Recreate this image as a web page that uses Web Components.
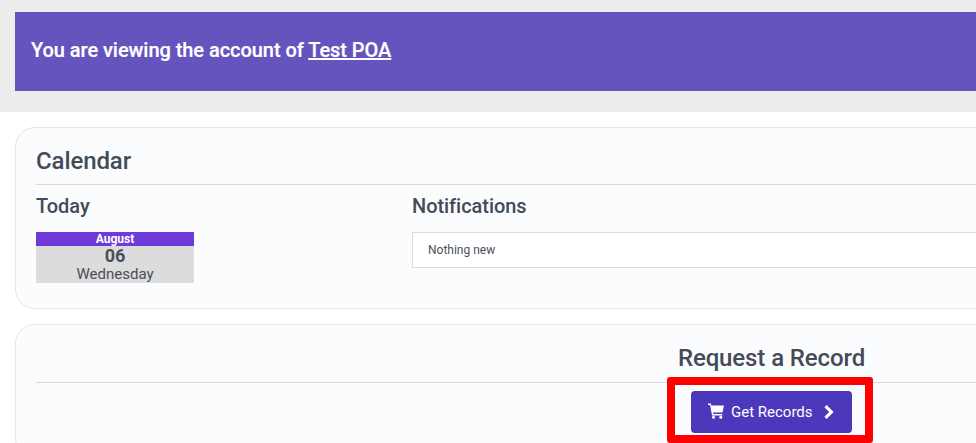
<!DOCTYPE html>
<html>
  <head>
    <meta charset="utf-8" />
    <title>Account</title>
    <style>
      html, body { margin: 0; background: #fff; overflow: hidden; }
      body { font-family: Roboto, "Liberation Sans", sans-serif; color: #3f4752; }
      .page { width: 1543px; }
    </style>
  </head>

  <body>
    <div class="page">
      <account-banner>You are viewing the account of <a>Test POA</a></account-banner>
      <main-card heading="Calendar" style="margin-top: 15px">
        <two-cols>
          <div slot="left">
            <col-title>Today</col-title>
            <date-tile month="August" day="06" weekday="Wednesday"></date-tile>
          </div>
          <div slot="right">
            <col-title>Notifications</col-title>
            <notice-box>Nothing new</notice-box>
          </div>
        </two-cols>
      </main-card>
      <main-card heading="Request a Record" centered style="margin-top: 15px">
        <get-button>Get Records</get-button>
      </main-card>
    </div>

    <script type="text/javascript">
      class AccountBanner extends HTMLElement {
        constructor() {
          super();
          this.attachShadow({ mode: "open" });
          this.shadowRoot.innerHTML = `
        <style>
          :host { display: block; background: #ededed; padding: 12px 0 21px 15px; }
          .bar {
            background: #6554bd; color: #fff; height: 75px; padding: 0 0 4px 16px;
            display: flex; align-items: center; font-size: 20px; font-weight: 500;
            letter-spacing: -0.05px; -webkit-text-stroke: 0.2px #fff;
          }
          ::slotted(a) { color: #fff; text-decoration: underline; }
        </style>
        <div class="bar"><span><slot></slot></span></div>
      `;
        }
      }

      class MainCard extends HTMLElement {
        constructor() {
          super();
          this.attachShadow({ mode: "open" });
          this.shadowRoot.innerHTML = `
        <style>
          :host { display: block; margin: 0 15px; }
          .card {
            background: #fbfcfe; border: 1px solid #e6e6e6; border-radius: 20px;
            padding: 19px 20px 25px;
          }
          h2 {
            margin: 0; font-size: 24px; font-weight: 500; line-height: 28px;
            padding-bottom: 9px; border-bottom: 1px solid #d8d9dc; color: #434b57;
            letter-spacing: -0.1px;
          }
          :host([centered]) h2 { text-align: center; padding-bottom: 10px; }
          :host([centered]) .body { text-align: center; padding-top: 8px; }
        </style>
        <div class="card">
          <h2></h2>
          <div class="body"><slot></slot></div>
        </div>
      `;
        }

        connectedCallback() {
          this.shadowRoot.querySelector("h2").textContent = this.getAttribute("heading");
        }
      }

      class TwoCols extends HTMLElement {
        constructor() {
          super();
          this.attachShadow({ mode: "open" });
          this.shadowRoot.innerHTML = `
        <style>
          :host { display: grid; grid-template-columns: 376px 1fr; }
        </style>
        <slot name="left"></slot>
        <slot name="right"></slot>
      `;
        }
      }

      class ColTitle extends HTMLElement {
        constructor() {
          super();
          this.attachShadow({ mode: "open" });
          this.shadowRoot.innerHTML = `
        <style>
          :host {
            display: block; font-size: 20px; font-weight: 500; line-height: 24px;
            padding: 9px 0 14px; color: #434b57; letter-spacing: -0.05px;
          }
        </style>
        <slot></slot>
      `;
        }
      }

      class DateTile extends HTMLElement {
        constructor() {
          super();
          this.attachShadow({ mode: "open" });
          this.shadowRoot.innerHTML = `
        <style>
          :host { display: block; width: 158px; text-align: center; background: #dcdcdc; height: 51px; }
          .month { background: #6e3bd8; color: #fff; font-size: 12px; font-weight: 700; line-height: 14px; height: 14px; }
          .day { font-size: 18px; font-weight: 700; line-height: 19px; color: #4a4f58; }
          .weekday { font-size: 15px; line-height: 18px; color: #4a4f58; }
        </style>
        <div class="month"></div>
        <div class="day"></div>
        <div class="weekday"></div>
      `;
        }

        connectedCallback() {
          this.shadowRoot.querySelector(".month").textContent = this.getAttribute("month");
          this.shadowRoot.querySelector(".day").textContent = this.getAttribute("day");
          this.shadowRoot.querySelector(".weekday").textContent = this.getAttribute("weekday");
        }
      }

      class NoticeBox extends HTMLElement {
        constructor() {
          super();
          this.attachShadow({ mode: "open" });
          this.shadowRoot.innerHTML = `
        <style>
          :host {
            display: block; background: #fff; border: 1px solid #dcdcdc; height: 34px;
            line-height: 34px; padding-left: 15px; font-size: 12px; color: #47505c;
          }
        </style>
        <slot></slot>
      `;
        }
      }

      class GetButton extends HTMLElement {
        constructor() {
          super();
          this.attachShadow({ mode: "open" });
          this.shadowRoot.innerHTML = `
        <style>
          :host { display: inline-block; position: relative; vertical-align: top; }
          button {
            display: flex; align-items: center; width: 161px; height: 42px; padding: 0 0 0 17px;
            background: #4b38bb; color: #fff; border: 0; border-radius: 4px;
            font: 400 15px Roboto, "Liberation Sans", sans-serif;
          }
          .cart { width: 16px; height: 16px; margin: -2px 7px 0 0; }
          .next { width: 12px; height: 14px; margin-left: 10px; }
          /* red marker drawn over the shot */
          .mark {
            position: absolute; left: -24px; top: -14px; width: 190px; height: 50px;
            border: 8px solid #f00; border-radius: 3px;
          }
        </style>
        <button>
          <svg class="cart" viewBox="0 0 16 16" fill="#fff">
            <path d="M0 .6h2.8l.6 2H16l-1.500 7H5l.3 1.400h9v1.400H4.100L2 2H0z" />
            <circle cx="5.500" cy="14.300" r="1.500" />
            <circle cx="12.800" cy="14.300" r="1.500" />
          </svg>
          <slot></slot>
          <svg class="next" viewBox="0 0 12 14" fill="#fff">
            <path d="M3.600 0 10.600 7l-7 7L1.400 11.800 6.200 7 1.400 2.200z" />
          </svg>
        </button>
        <div class="mark"></div>
      `;
        }
      }

      customElements.define("account-banner", AccountBanner);
      customElements.define("main-card", MainCard);
      customElements.define("two-cols", TwoCols);
      customElements.define("col-title", ColTitle);
      customElements.define("date-tile", DateTile);
      customElements.define("notice-box", NoticeBox);
      customElements.define("get-button", GetButton);
    </script>
  </body>
</html>
